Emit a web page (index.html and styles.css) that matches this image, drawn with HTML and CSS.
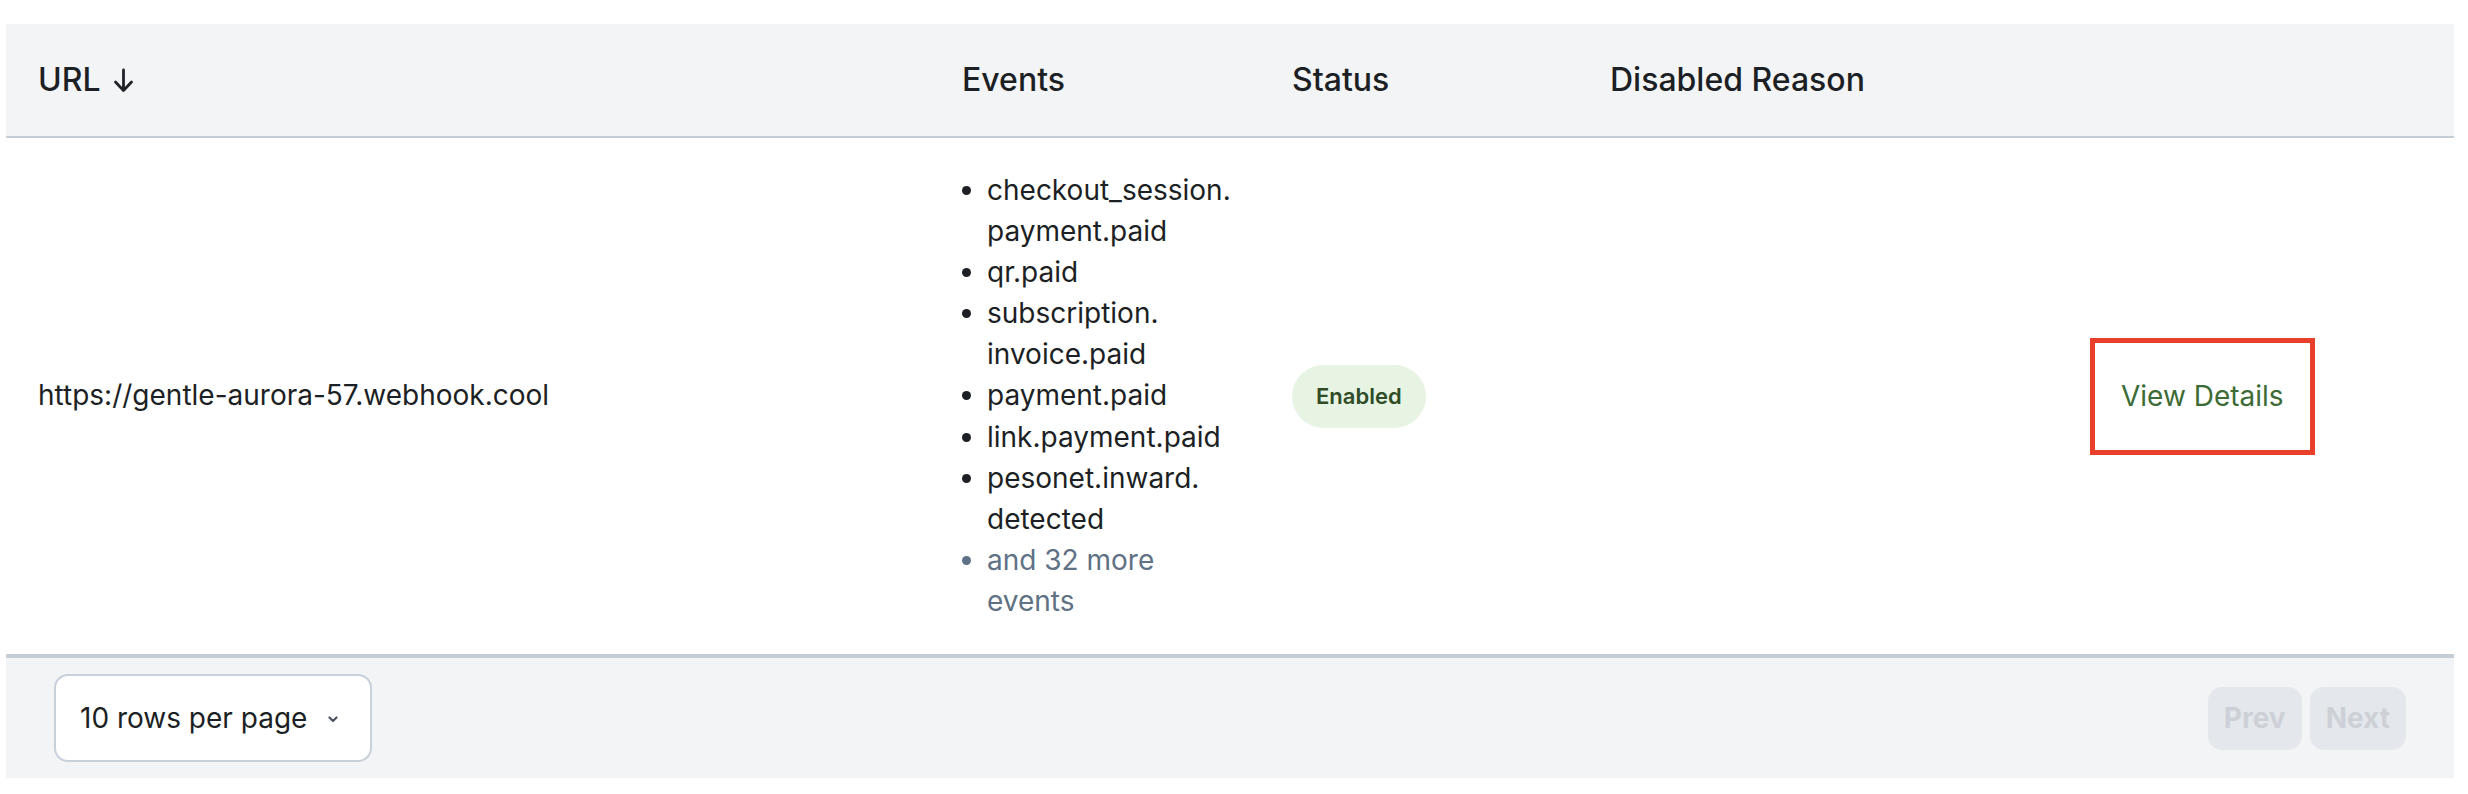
FILE: index.html
```html
<!DOCTYPE html>
<html lang="en">
<head>
<meta charset="utf-8">
<title>Webhooks</title>
<link rel="stylesheet" href="styles.css">
</head>
<body>
<div class="table">
  <div class="row head">
    <div class="cell th">
      <span>URL</span>
      <svg class="sort" width="21" height="25" viewBox="0 0 21 25" aria-hidden="true"><path d="M10.5 2v20M2.5 14l8 8.5 8-8.5" fill="none" stroke="currentColor" stroke-width="2.8" stroke-linecap="round" stroke-linejoin="round"/></svg>
    </div>
    <div class="cell th">Events</div>
    <div class="cell th">Status</div>
    <div class="cell th">Disabled Reason</div>
    <div class="cell th"></div>
  </div>
  <div class="row body">
    <div class="cell td">https://gentle-aurora-57.webhook.cool</div>
    <div class="cell td">
      <ul class="events">
        <li>checkout_session.<wbr>payment.<wbr>paid</li>
        <li>qr.<wbr>paid</li>
        <li>subscription.<wbr>invoice.<wbr>paid</li>
        <li>payment.<wbr>paid</li>
        <li>link.<wbr>payment.<wbr>paid</li>
        <li>pesonet.<wbr>inward.<wbr>detected</li>
        <li class="more">and 32 more events</li>
      </ul>
    </div>
    <div class="cell td"><span class="badge">Enabled</span></div>
    <div class="cell td"></div>
    <div class="cell td"><a class="details" href="#">View Details</a></div>
  </div>
  <div class="foot">
    <div class="select">
      <span>10 rows per page</span>
      <svg class="chev" width="10" height="7" viewBox="0 0 10 7" aria-hidden="true"><path d="M1.5 1.5 5 5l3.5-3.5" fill="none" stroke="currentColor" stroke-width="2.2" stroke-linecap="round" stroke-linejoin="round"/></svg>
    </div>
    <div class="pager">
      <button class="pbtn" disabled>Prev</button>
      <button class="pbtn" disabled>Next</button>
    </div>
  </div>
</div>
</body>
</html>
```
FILE: styles.css
```css
html, body {
  margin: 0;
  padding: 0;
  background: #ffffff;
}

body {
  padding: 24px 14px 0 6px;
  font-family: Inter, "Noto Sans", "Liberation Sans", sans-serif;
  color: #1c1f24;
}

.table {
  width: 2448px;
}

.row {
  display: grid;
  grid-template-columns: 924px 330px 318px 480px 1fr;
}

.cell {
  padding: 0 32px;
  display: flex;
  align-items: center;
}

.head {
  background: #f3f4f6;
  border-bottom: 2px solid #c5cdd7;
}

.th {
  font-size: 32px;
  font-weight: 500;
  line-height: 48px;
  padding-top: 32px;
  padding-bottom: 32px;
  color: #1c1f24;
}

.sort {
  margin-left: 12px;
  color: #1f2328;
}

.body .td {
  font-size: 28px;
  line-height: 41.1px;
  padding-top: 32px;
  padding-bottom: 32px;
}

.events {
  margin: 0;
  padding: 0 0 0 25px;
  list-style: disc outside;
  width: 241px;
}

.events li {
  color: #1c1f24;
}

.events li.more {
  color: #5f7184;
}

.badge {
  display: inline-block;
  background: #e7f4e3;
  color: #2f4c27;
  font-size: 22px;
  font-weight: 600;
  line-height: 31px;
  padding: 16px 24px;
  border-radius: 999px;
}

.details {
  display: inline-block;
  color: #3d6b35;
  text-decoration: none;
  font-size: 28px;
  line-height: 41px;
  padding: 33px 26px;
  border: 5px solid #e8402a;
}

.foot {
  background: #f3f4f6;
  border-top: 4px solid #c5cdd7;
  height: 120px;
  padding: 0 48px;
  display: flex;
  align-items: center;
  justify-content: space-between;
}

.select {
  box-sizing: border-box;
  height: 88px;
  width: 318px;
  background: #ffffff;
  border: 2px solid #c8d0da;
  border-radius: 14px;
  padding: 0 24px;
  display: flex;
  align-items: center;
  gap: 21px;
  font-size: 28px;
  color: #1c1f24;
}

.chev {
  color: #4b5563;
  margin-top: 2px;
}

.pager {
  display: flex;
  gap: 8px;
}

.pbtn {
  font-family: inherit;
  font-size: 28px;
  font-weight: 700;
  line-height: 41px;
  padding: 11px 16px;
  background: #e4e7eb;
  color: #cdd1d7;
  border: 0;
  border-radius: 14px;
  cursor: default;
}
```
